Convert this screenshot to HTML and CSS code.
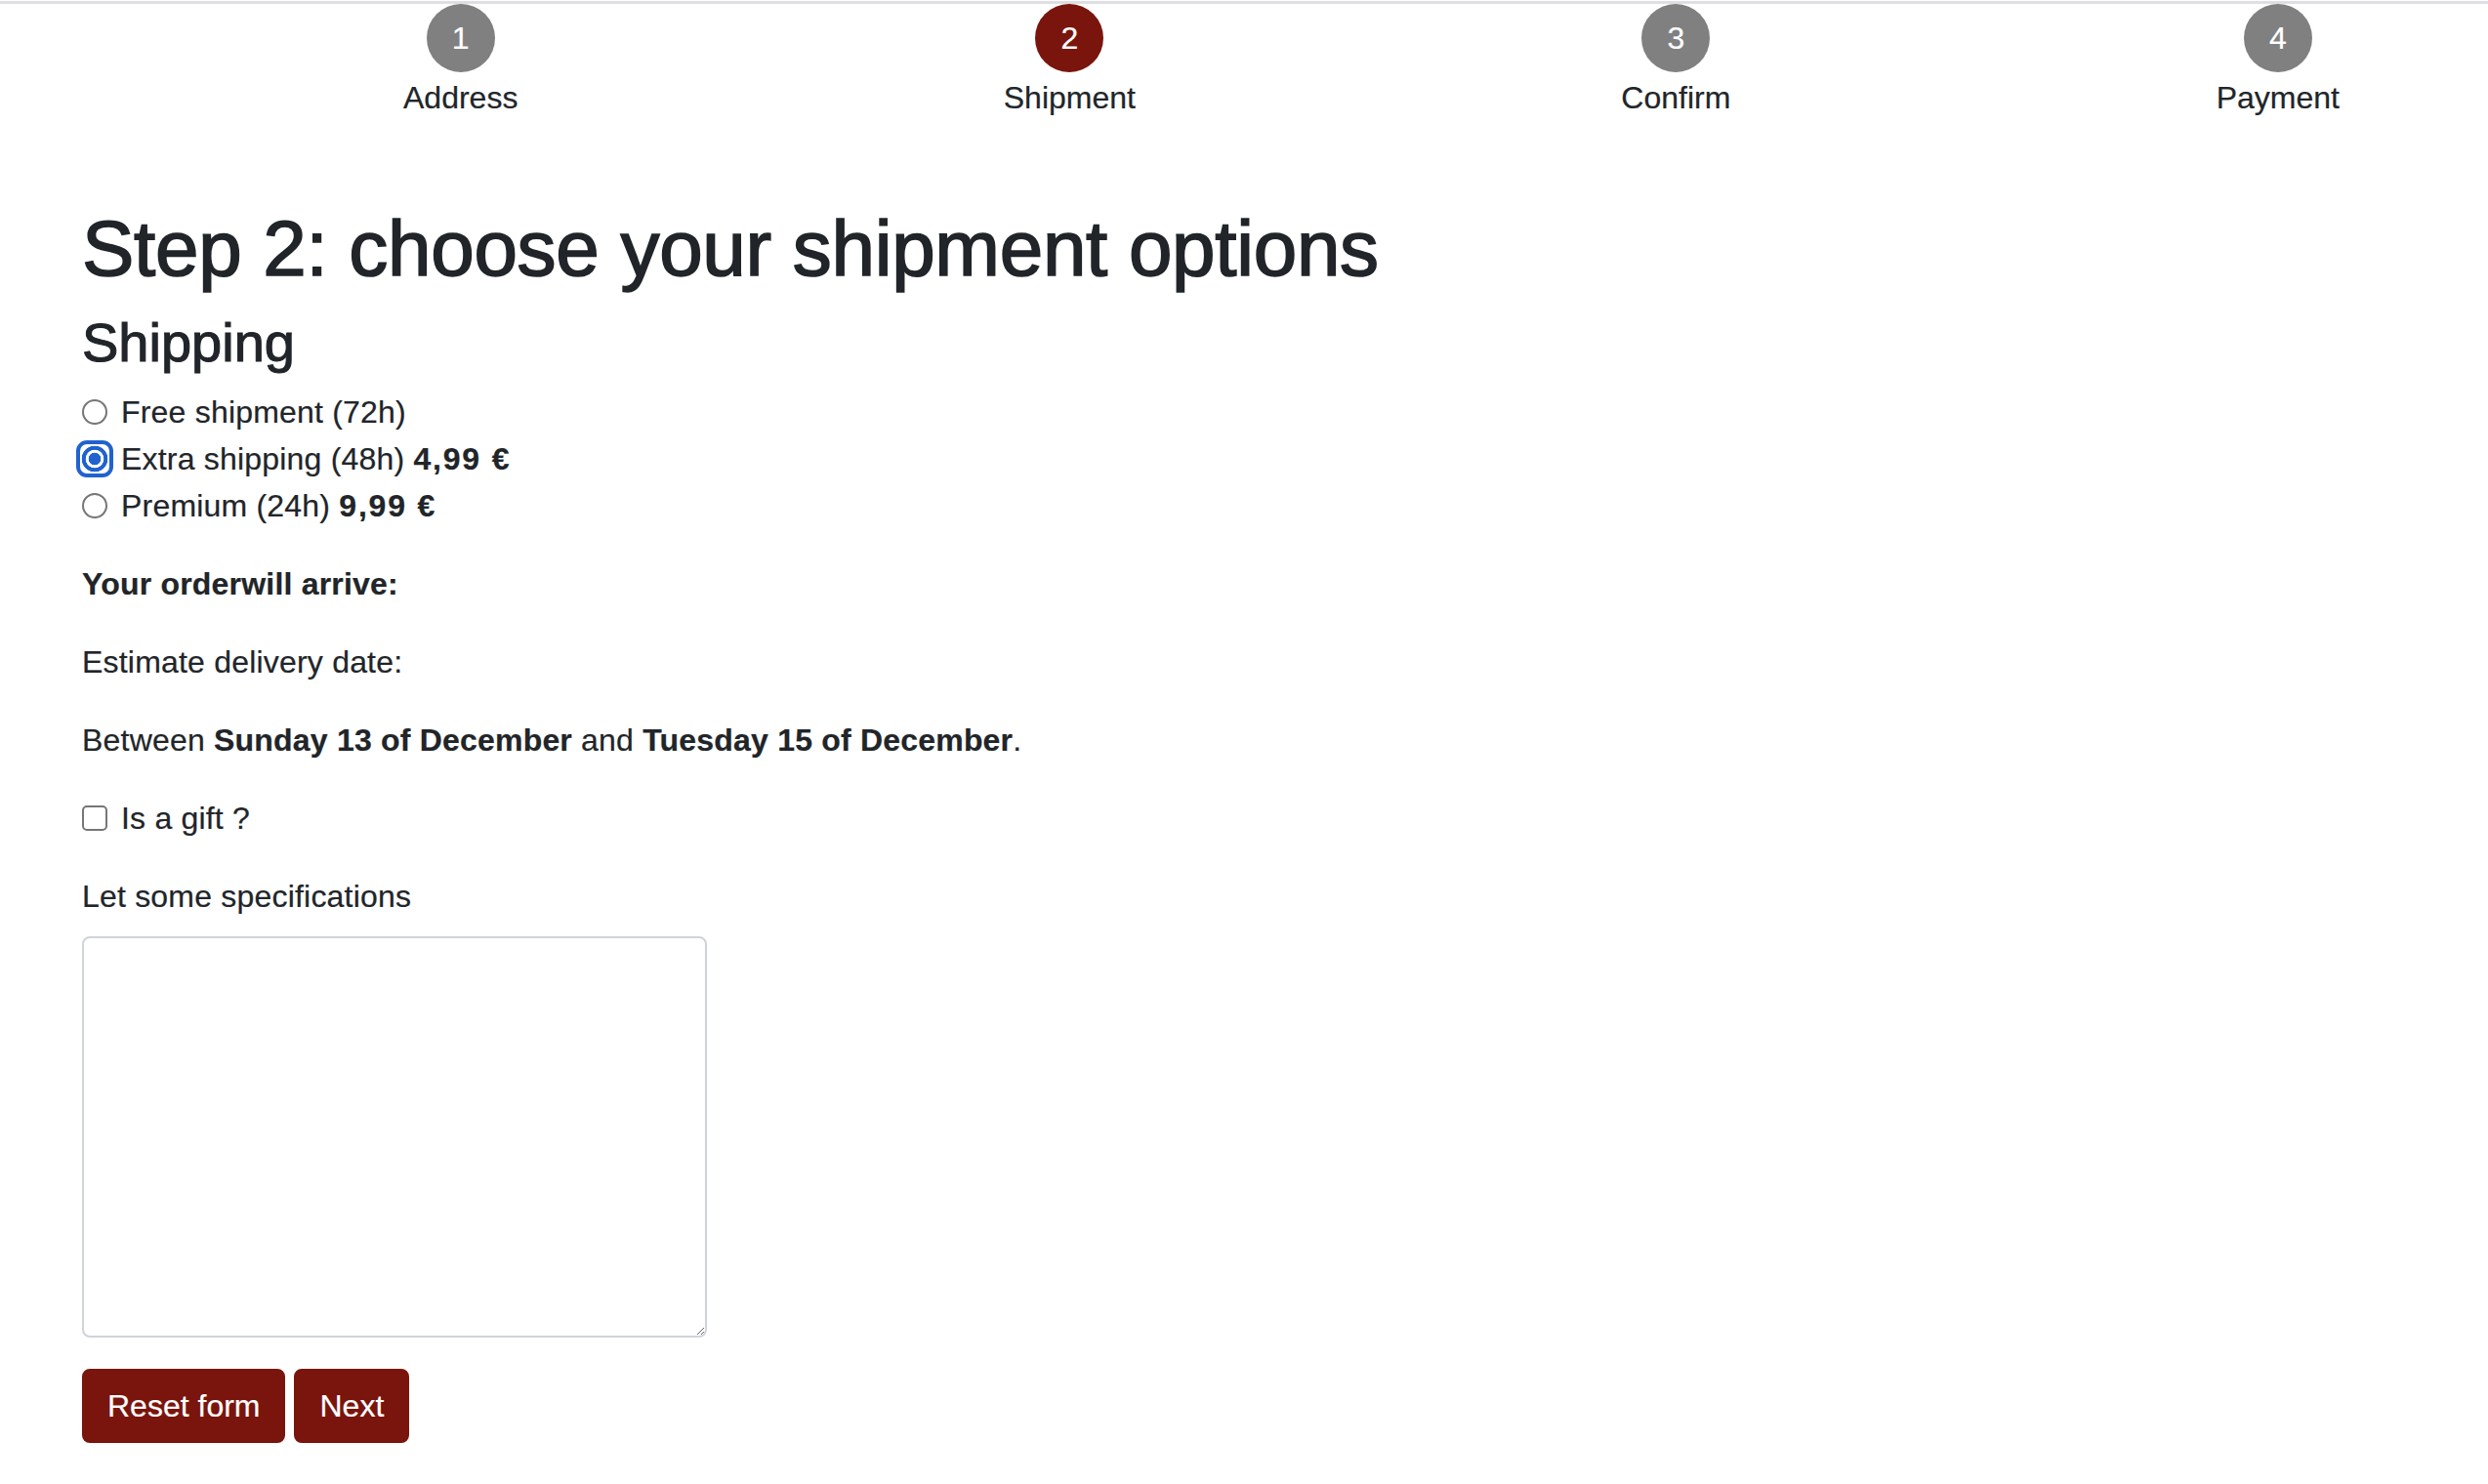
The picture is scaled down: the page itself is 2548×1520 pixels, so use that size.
FILE: index.html
```html
<!DOCTYPE html>
<html lang="en">
<head>
<meta charset="utf-8">
<title>Shipment</title>
<link rel="stylesheet" href="styles.css">
</head>
<body>
<div class="topline"></div>
<nav class="stepper">
  <div class="step"><span class="num">1</span><span class="label">Address</span></div>
  <div class="step active"><span class="num">2</span><span class="label">Shipment</span></div>
  <div class="step"><span class="num">3</span><span class="label">Confirm</span></div>
  <div class="step"><span class="num">4</span><span class="label">Payment</span></div>
</nav>
<main class="page">
  <h1 class="title">Step 2: choose your shipment options</h1>
  <h3 class="subtitle">Shipping</h3>
  <div class="options">
    <label class="opt"><input class="radio" type="radio" name="ship"><span>Free shipment (72h)</span></label>
    <label class="opt"><input class="radio focused" type="radio" name="ship" checked><span>Extra shipping (48h) <b class="price">4,99 €</b></span></label>
    <label class="opt"><input class="radio" type="radio" name="ship"><span>Premium (24h) <b class="price">9,99 €</b></span></label>
  </div>
  <p class="para"><b>Your orderwill arrive:</b></p>
  <p class="para">Estimate delivery date:</p>
  <p class="para">Between <b>Sunday 13 of December</b> and <b>Tuesday 15 of December</b>.</p>
  <label class="opt gift"><input class="check" type="checkbox"><span>Is a gift ?</span></label>
  <label class="spec-label" for="spec">Let some specifications</label>
  <textarea id="spec" class="spec"></textarea>
  <div class="actions">
    <button class="btn" type="button">Reset form</button>
    <button class="btn" type="button">Next</button>
  </div>
</main>
</body>
</html>
```

FILE: styles.css
```css
html, body {
  margin: 0;
  padding: 0;
  background: #fff;
}
body {
  font-family: "Liberation Sans", Arial, sans-serif;
  font-size: 32px;
  line-height: 48px;
  color: #212529;
  padding-top: 1px;
  -webkit-text-stroke: 0.2px currentColor;
}
.topline {
  height: 3px;
  background: #dedee4;
}
.stepper {
  display: flex;
  justify-content: space-between;
  padding: 0 152px 0 413px;
}
.step {
  display: flex;
  flex-direction: column;
  align-items: center;
}
.num {
  width: 70px;
  height: 70px;
  border-radius: 50%;
  background: #808080;
  color: #fff;
  display: flex;
  align-items: center;
  justify-content: center;
  font-size: 32px;
  margin-bottom: 2px;
}
.step.active .num {
  background: #79150d;
}
.label {
  display: block;
}
.page {
  padding: 83px 0 40px 84px;
}
.title {
  margin: 0 0 14px;
  font-size: 80px;
  line-height: 96px;
  font-weight: 400;
  letter-spacing: -0.3px;
  -webkit-text-stroke: 1.6px currentColor;
}
.subtitle {
  margin: 0 0 14px;
  font-size: 56px;
  line-height: 67px;
  font-weight: 400;
  -webkit-text-stroke: 1.1px currentColor;
}
.options {
  margin-bottom: 32px;
}
.opt {
  display: flex;
  align-items: center;
  height: 48px;
  letter-spacing: 0.2px;
}
.opt b {
  font-weight: 700;
}
.price {
  letter-spacing: 1.8px;
}
.radio {
  appearance: none;
  -webkit-appearance: none;
  box-sizing: border-box;
  width: 26px;
  height: 26px;
  margin: 0 14px 0 0;
  border: 2px solid #767676;
  border-radius: 50%;
  background: #fff;
  flex: none;
}
.radio.focused {
  width: 38px;
  height: 38px;
  margin: -6px 8px -6px -6px;
  border: 4px solid #2162cf;
  border-radius: 11px;
  background: radial-gradient(circle, #2162cf 0 6px, #fff 6.6px 9px, #2162cf 9.6px 13px, #fff 13.6px);
}
.para {
  margin: 0 0 32px;
  letter-spacing: 0.2px;
}
.gift {
  margin-bottom: 32px;
}
.check {
  appearance: none;
  -webkit-appearance: none;
  box-sizing: border-box;
  width: 26px;
  height: 26px;
  margin: 0 14px 0 0;
  border: 2px solid #767676;
  border-radius: 5px;
  background: #fff;
  flex: none;
}
.spec-label {
  display: block;
  margin-bottom: 17px;
  letter-spacing: 0.2px;
}
.spec {
  display: block;
  box-sizing: border-box;
  width: 640px;
  height: 411px;
  margin: 0 0 32px;
  border: 2px solid #ced4da;
  border-radius: 8px;
  font: inherit;
  padding: 12px 24px;
}
.actions {
  display: flex;
  gap: 9px;
}
.btn {
  font-family: inherit;
  font-size: 32px;
  line-height: 48px;
  padding: 12px 24px;
  border: 2px solid #79150d;
  border-radius: 8px;
  background: #79150d;
  color: #fff;
  -webkit-text-stroke: 0.2px #fff;
}
```
